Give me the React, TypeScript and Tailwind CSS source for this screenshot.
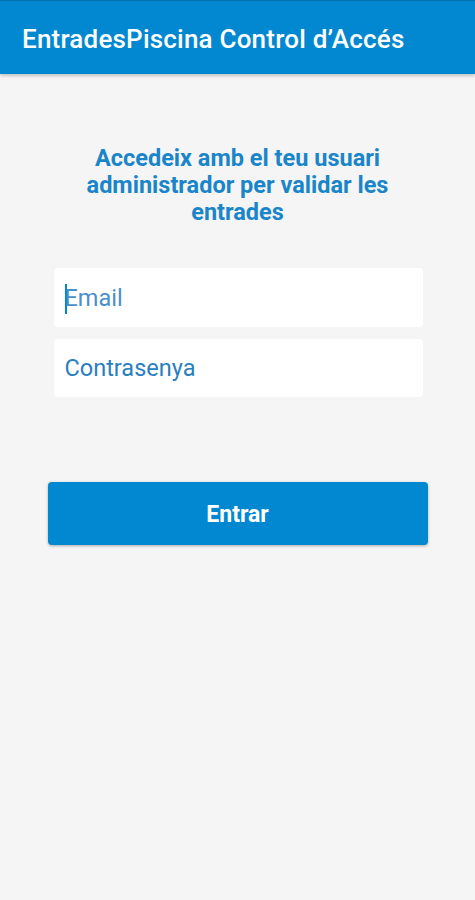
import React from "react";

export default function App() {
  return (
    <div className="w-[475px] h-[900px] bg-[#f5f5f5] flex flex-col" style={{ fontFamily: "Roboto, 'Noto Sans', sans-serif" }}>
      <div className="h-[74px] bg-[#0288d1] flex items-center pl-[22px] pt-[3px] shadow-[0_2px_3px_rgba(0,0,0,0.2)] border-t border-[#0570ad]">
        <span className="text-white text-[26px] font-medium tracking-[0.2px] leading-none">EntradesPiscina Control d’Accés</span>
      </div>
      <div className="flex flex-col items-center">
        <div className="mt-[71px] w-[360px] text-center text-[#1a85c8] text-[23.5px] font-bold leading-[27px]">
          Accedeix amb el teu usuari administrador per validar les entrades
        </div>
        <div className="mt-[42px] w-[369px] flex flex-col gap-[12px] ml-[1px]">
          <div className="h-[59px] bg-white rounded-[4px] flex items-center pl-[11px] pt-[2px]">
            <span className="w-[2px] h-[30px] bg-[#0288d1] -mr-[2px]"></span>
            <span className="text-[23.5px] text-[#4a8fc9]">Email</span>
          </div>
          <div className="h-[58px] bg-white rounded-[4px] flex items-center pl-[11px] pt-[2px]">
            <span className="text-[23.5px] text-[#2a7fc0]">Contrasenya</span>
          </div>
        </div>
        <button className="mt-[85px] w-[380px] h-[63px] bg-[#0288d1] rounded-[4px] text-white text-[23px] font-bold pt-[4px] shadow-[0_1px_3px_rgba(0,0,0,0.3)]">
          Entrar
        </button>
      </div>
    </div>
  );
}
